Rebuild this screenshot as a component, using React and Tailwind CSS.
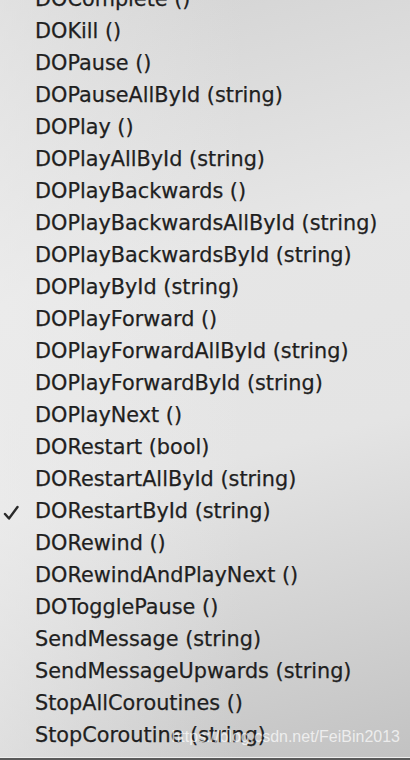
const items = [
  "DOComplete ()",
  "DOKill ()",
  "DOPause ()",
  "DOPauseAllById (string)",
  "DOPlay ()",
  "DOPlayAllById (string)",
  "DOPlayBackwards ()",
  "DOPlayBackwardsAllById (string)",
  "DOPlayBackwardsById (string)",
  "DOPlayById (string)",
  "DOPlayForward ()",
  "DOPlayForwardAllById (string)",
  "DOPlayForwardById (string)",
  "DOPlayNext ()",
  "DORestart (bool)",
  "DORestartAllById (string)",
  "DORestartById (string)",
  "DORewind ()",
  "DORewindAndPlayNext ()",
  "DOTogglePause ()",
  "SendMessage (string)",
  "SendMessageUpwards (string)",
  "StopAllCoroutines ()",
  "StopCoroutine (string)",
];

const Check = () => (
  <svg width="16" height="16" viewBox="0 0 16 16" className="absolute left-[3px] top-[9px]">
    <path d="M2 9 L6 13.5 L14.5 2" fill="none" stroke="#2a2a2a" strokeWidth="2.4" strokeLinecap="round" strokeLinejoin="round" />
  </svg>
);

export default function App() {
  return (
    <div className="relative h-[760px] w-[410px] overflow-hidden bg-[linear-gradient(165deg,#d2d2d2_0%,#e6e6e6_35%,#e4e4e4_60%,#c2c2c2_100%)] font-['DejaVu_Sans',sans-serif]">
      <div className="absolute inset-0 bg-[linear-gradient(90deg,rgba(240,240,240,0.5)_0%,rgba(240,240,240,0)_60%)]" />
      <ul className="relative -mt-[16px]">
        {items.map((t) => (
          <li key={t} className="relative flex h-8 items-center whitespace-nowrap pl-[35px] text-[20.8px] text-[#1f1f1f] [-webkit-text-stroke:0.25px_#1f1f1f]">
            {t === "DORestartById (string)" && <Check />}
            {t}
          </li>
        ))}
      </ul>
      <div className="absolute bottom-[11px] right-[10px] font-['Liberation_Sans',sans-serif] text-[16px] text-white/70">
        https://blog.csdn.net/FeiBin2013
      </div>
      <div className="absolute bottom-0 left-0 h-[3px] w-full border-t border-[#eeeeee] bg-[#5a5a5a]" />
    </div>
  );
}
